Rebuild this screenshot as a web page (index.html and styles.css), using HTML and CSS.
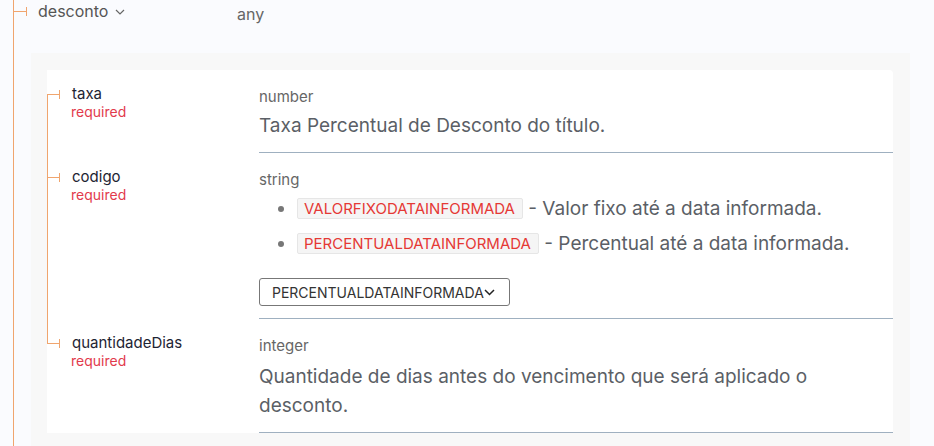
FILE: index.html
```html
<!DOCTYPE html>
<html lang="pt-BR">
<head>
    <meta charset="UTF-8">
    <meta name="viewport" content="width=device-width, initial-scale=1.0">
    <title>desconto</title>
    <link rel="stylesheet" href="styles.css">
</head>
<body>
    <div class="tree">
        <div class="top-row">
            <div class="top-name">
                <svg class="tick" width="14" height="22" viewBox="0 0 14 22"><path d="M0 11.5H12.5M12.5 7v9" stroke="#f0a56e" fill="none"/></svg>
                <span class="top-label">desconto</span>
                <svg class="toggle" width="10" height="6" viewBox="0 0 10 6"><path d="M1 1l4 4 4-4" stroke="#666" stroke-width="1.2" fill="none"/></svg>
            </div>
            <div class="top-type">any</div>
        </div>

        <div class="sub-box">
            <div class="card">
                <div class="field first">
                    <div class="field-name">
                        <svg class="tick" width="14" height="20" viewBox="0 0 14 20"><path d="M0 10.5H12.5M12.5 6v9" stroke="#f0a56e" fill="none"/></svg>
                        <div>
                            <div class="prop-name">taxa</div>
                            <div class="required">required</div>
                        </div>
                    </div>
                    <div class="field-detail">
                        <div class="type">number</div>
                        <p class="desc">Taxa Percentual de Desconto do título.</p>
                    </div>
                </div>

                <div class="field">
                    <div class="field-name">
                        <svg class="tick" width="14" height="20" viewBox="0 0 14 20"><path d="M0 10.5H12.5M12.5 6v9" stroke="#f0a56e" fill="none"/></svg>
                        <div>
                            <div class="prop-name">codigo</div>
                            <div class="required">required</div>
                        </div>
                    </div>
                    <div class="field-detail">
                        <div class="type">string</div>
                        <ul class="enum-list">
                            <li><code>VALORFIXODATAINFORMADA</code> - Valor fixo até a data informada.</li>
                            <li><code>PERCENTUALDATAINFORMADA</code> - Percentual até a data informada.</li>
                        </ul>
                        <div class="dropdown">
                            <span>PERCENTUALDATAINFORMADA</span>
                            <svg width="11" height="7" viewBox="0 0 11 7"><path d="M1 1l4.5 4.5L10 1" stroke="#222" stroke-width="1.5" fill="none"/></svg>
                        </div>
                    </div>
                </div>

                <div class="field last">
                    <div class="field-name">
                        <svg class="tick" width="14" height="20" viewBox="0 0 14 20"><path d="M0 10.5H12.5M12.5 6v9" stroke="#f0a56e" fill="none"/></svg>
                        <div>
                            <div class="prop-name">quantidadeDias</div>
                            <div class="required">required</div>
                        </div>
                    </div>
                    <div class="field-detail">
                        <div class="type">integer</div>
                        <p class="desc">Quantidade de dias antes do vencimento que será aplicado o desconto.</p>
                    </div>
                </div>
            </div>
        </div>
    </div>
</body>
</html>
```

FILE: styles.css
```css
body {
    margin: 0;
    background-color: #fafbfe;
    font-family: Inter, "Noto Sans", sans-serif;
}
.tree {
    margin-left: 13px;
    border-left: 1px solid #f0a56e;
    min-height: 446px;
}
.top-row {
    display: flex;
    height: 53px;
}
.top-name {
    width: 223px;
    display: flex;
    align-items: flex-start;
}
.top-name .tick {
    flex: none;
    margin-right: 10px;
}
.top-label {
    font-size: 16px;
    line-height: 22px;
    color: #555;
}
.toggle {
    margin: 9px 0 0 7px;
}
.top-type {
    padding-top: 3px;
    font-size: 16px;
    line-height: 22px;
    color: #666;
}
.sub-box {
    margin: 0 24px 0 17px;
    padding: 17px 17px 30px 16px;
    background-color: #f8f8f8;
}
.card {
    background-color: #fff;
    border-radius: 0 4px 0 0;
}
.field {
    display: flex;
}
.field-name {
    position: relative;
    width: 212px;
    flex: none;
    display: flex;
    align-items: flex-start;
    padding-top: 14px;
    box-sizing: border-box;
}
.field-name::before {
    content: "";
    position: absolute;
    left: 0;
    top: 0;
    bottom: 0;
    border-left: 1px solid #f0a56e;
}
.field.first .field-name::before {
    top: 24px;
}
.field.last .field-name::before {
    bottom: auto;
    height: 25px;
}
.field-name .tick {
    flex: none;
    margin-right: 11px;
}
.prop-name {
    font-size: 15px;
    line-height: 20px;
    color: #1e2433;
}
.required {
    font-size: 14px;
    line-height: 16px;
    color: #e23a4c;
    margin-left: -1px;
}
.field-detail {
    flex: 1;
    padding: 17px 0 12px;
    border-bottom: 1px solid #9fb0c0;
}
.type {
    font-size: 15px;
    line-height: 20px;
    color: #666;
}
.desc {
    margin: 4px 0 0;
    max-width: 620px;
    font-size: 19px;
    line-height: 29px;
    color: #5b5f66;
}
.field.last .desc {
    margin-top: 6px;
}
.enum-list {
    margin: 4px 0 0;
    padding-left: 38px;
    color: #5b5f66;
    font-size: 19px;
    line-height: 29px;
}
.enum-list li {
    margin-bottom: 6px;
}
.enum-list li::marker {
    color: #777;
}
.enum-list code {
    font-family: Inter, "Noto Sans", sans-serif;
    font-size: 15px;
    line-height: 19px;
    padding: 0 7px 0 6px;
    color: #e53935;
    background-color: #f5f5f5;
    border: 1px solid #e6e6e6;
    border-radius: 2px;
    display: inline-block;
    vertical-align: 1px;
}
.dropdown {
    margin-top: 14px;
    display: inline-flex;
    align-items: center;
    height: 28px;
    box-sizing: border-box;
    padding: 0 14px 0 12px;
    border: 1px solid #777;
    border-radius: 3px;
    font-size: 14px;
    color: #333;
}
```
